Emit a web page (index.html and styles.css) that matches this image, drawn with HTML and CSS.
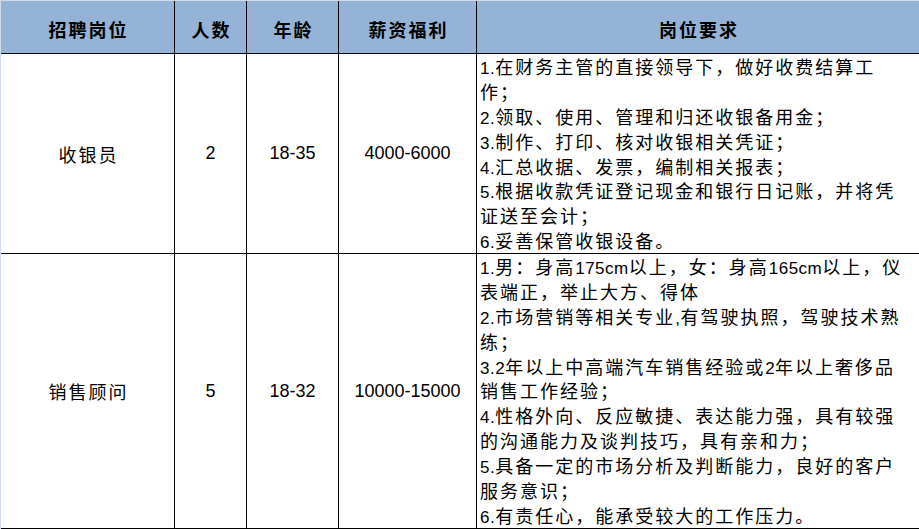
FILE: index.html
```html
<!DOCTYPE html>
<html lang="zh-CN">
<head>
<meta charset="utf-8">
<title>招聘岗位</title>
<link rel="stylesheet" href="styles.css">
</head>
<body>
<div class="sheet">
  <div class="grid">
    <div class="cell head">招聘岗位</div>
    <div class="cell head">人数</div>
    <div class="cell head">年龄</div>
    <div class="cell head">薪资福利</div>
    <div class="cell head last">岗位要求</div>

    <div class="cell">收银员</div>
    <div class="cell num">2</div>
    <div class="cell num">18-35</div>
    <div class="cell num">4000-6000</div>
    <div class="cell req last">
      <span class="ln"><span class="hw">1.</span>在财务主管的直接领导下，做好收费结算工</span>
      <span class="ln">作；</span>
      <span class="ln"><span class="hw">2.</span>领取、使用、管理和归还收银备用金；</span>
      <span class="ln"><span class="hw">3.</span>制作、打印、核对收银相关凭证；</span>
      <span class="ln"><span class="hw">4.</span>汇总收据、发票，编制相关报表；</span>
      <span class="ln"><span class="hw">5.</span>根据收款凭证登记现金和银行日记账，并将凭</span>
      <span class="ln">证送至会计；</span>
      <span class="ln"><span class="hw">6.</span>妥善保管收银设备。</span>
    </div>

    <div class="cell">销售顾问</div>
    <div class="cell num">5</div>
    <div class="cell num">18-32</div>
    <div class="cell num">10000-15000</div>
    <div class="cell req last">
      <span class="ln"><span class="hw">1.</span>男：身高<span class="hw">175cm</span>以上，女：身高<span class="hw">165cm</span>以上，仪</span>
      <span class="ln">表端正，举止大方、得体</span>
      <span class="ln"><span class="hw">2.</span>市场营销等相关专业<span class="hw">,</span>有驾驶执照，驾驶技术熟</span>
      <span class="ln">练；</span>
      <span class="ln"><span class="hw">3.2</span>年以上中高端汽车销售经验或<span class="hw">2</span>年以上奢侈品</span>
      <span class="ln">销售工作经验；</span>
      <span class="ln"><span class="hw">4.</span>性格外向、反应敏捷、表达能力强，具有较强</span>
      <span class="ln">的沟通能力及谈判技巧，具有亲和力；</span>
      <span class="ln"><span class="hw">5.</span>具备一定的市场分析及判断能力，良好的客户</span>
      <span class="ln">服务意识；</span>
      <span class="ln"><span class="hw">6.</span>有责任心，能承受较大的工作压力。</span>
    </div>
  </div>
</div>
</body>
</html>
```
FILE: styles.css
```css
html, body {
  margin: 0;
  padding: 0;
  background: #ffffff;
}

.sheet {
  width: 919px;
  height: 529px;
  box-sizing: border-box;
  padding: 1px 0 0 1px;
  background: #d2dbe8;
  overflow: hidden;
}

.grid {
  display: grid;
  grid-template-columns: 174px 72px 92px 138px 442px;
  grid-template-rows: 53px 200px 275px;
  background: #ffffff;
  font-family: "Noto Sans CJK SC", "Liberation Sans", sans-serif;
  color: #000000;
}

.cell {
  box-sizing: border-box;
  border-right: 1px solid #000000;
  border-bottom: 1px solid #000000;
  display: flex;
  align-items: center;
  justify-content: center;
  font-size: 18px;
  letter-spacing: 2px;
  padding-left: 2px;
  overflow: hidden;
}

.head {
  background: #95b3d7;
  font-weight: bold;
  padding-top: 4px;
}

.last {
  border-right: none;
}

.num {
  font-family: "Liberation Sans", "Noto Sans CJK SC", sans-serif;
  letter-spacing: 0;
  padding-left: 0;
}

.req {
  display: block;
  padding: 0 0 0 3px;
  line-height: 24.9px;
  white-space: nowrap;
}

.ln {
  display: block;
  height: 24.9px;
}

.hw {
  font-family: "Liberation Sans", sans-serif;
  font-size: 17px;
  line-height: 0;
  letter-spacing: 0.5px;
}
```
